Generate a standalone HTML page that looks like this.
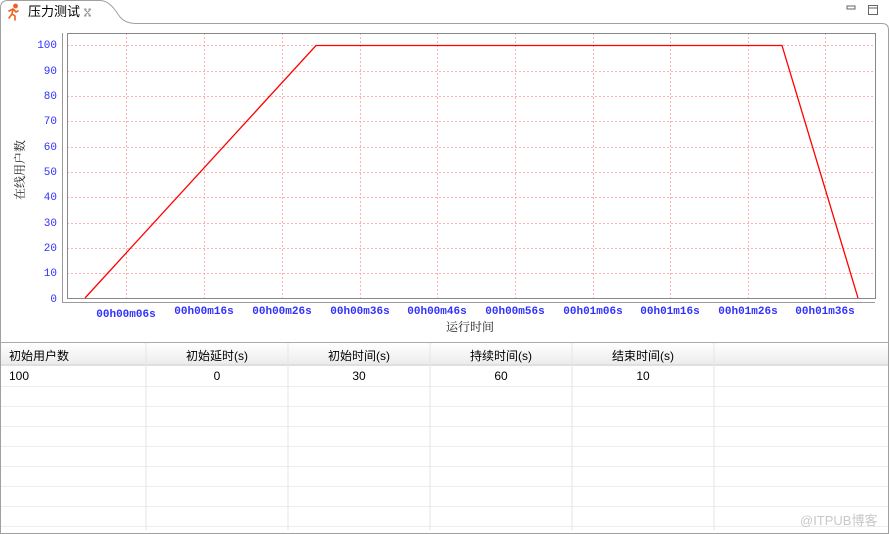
<!DOCTYPE html><html><head><meta charset="utf-8"><style>
body{margin:0;width:890px;height:534px;background:#fff;overflow:hidden;font-family:"Liberation Sans","Noto Sans CJK SC",sans-serif;position:relative}
.t{position:absolute;font-size:12px;color:#000}
</style></head><body>
<svg width="890" height="534" style="position:absolute;left:0;top:0" font-family="Liberation Mono, monospace">
<path d="M0.5 534V8Q0.5 0.5 8 0.5H100Q108 0.5 115 10L120 17Q125 23 135 23.5H882Q888.5 23.5 888.5 30V533.5H0.5" fill="none" stroke="#a0a0a0"/>
<rect x="847" y="6" width="8" height="3" fill="none" stroke="#666"/>
<rect x="868.5" y="5.5" width="9" height="9" fill="none" stroke="#666"/><line x1="868" y1="8" x2="878" y2="8" stroke="#666"/>
<g stroke="#f06020" stroke-width="1.6" fill="none" stroke-linecap="round"><path d="M9 11l4-2 3 3 2-1 M13 9l-1 5-3 4 M12 14l3 2v4"/><circle cx="15.5" cy="6" r="1.6" fill="#f06020"/></g>
<text x="28" y="16" font-size="13" font-family="Liberation Sans,Noto Sans CJK SC,sans-serif">压力测试</text>
<g stroke="#999" stroke-width="1" fill="none"><path d="M84.5 9.5l6 6M90.5 9.5l-6 6M84 9h2v2M91 9h-2v2M84 16h2v-2M91 16h-2v-2"/></g>
<g stroke="#ffb0b0" stroke-dasharray="2,2" stroke-width="1">
<line x1="67" x2="875" y1="45.5" y2="45.5"/><line x1="67" x2="875" y1="71.5" y2="71.5"/><line x1="67" x2="875" y1="96.5" y2="96.5"/><line x1="67" x2="875" y1="121.5" y2="121.5"/><line x1="67" x2="875" y1="147.5" y2="147.5"/><line x1="67" x2="875" y1="172.5" y2="172.5"/><line x1="67" x2="875" y1="197.5" y2="197.5"/><line x1="67" x2="875" y1="223.5" y2="223.5"/><line x1="67" x2="875" y1="248.5" y2="248.5"/><line x1="67" x2="875" y1="273.5" y2="273.5"/>
<line y1="33" y2="298" x1="126.5" x2="126.5"/><line y1="33" y2="298" x1="204.5" x2="204.5"/><line y1="33" y2="298" x1="282.5" x2="282.5"/><line y1="33" y2="298" x1="360.5" x2="360.5"/><line y1="33" y2="298" x1="437.5" x2="437.5"/><line y1="33" y2="298" x1="515.5" x2="515.5"/><line y1="33" y2="298" x1="593.5" x2="593.5"/><line y1="33" y2="298" x1="670.5" x2="670.5"/><line y1="33" y2="298" x1="748.5" x2="748.5"/><line y1="33" y2="298" x1="825.5" x2="825.5"/>
</g>
<rect x="67.5" y="33.5" width="808" height="265" fill="none" stroke="#888"/>
<line x1="62.5" y1="33" x2="62.5" y2="302" stroke="#999"/>
<line x1="62" y1="302.5" x2="875" y2="302.5" stroke="#999"/>
<polyline points="85,298 316,45.5 782,45.5 858,298" fill="none" stroke="#f00" stroke-width="1.3"/>
<g font-size="11" fill="#3030ff" text-anchor="end">
<text x="57" y="48">100</text><text x="57" y="74">90</text><text x="57" y="99">80</text><text x="57" y="124">70</text><text x="57" y="150">60</text><text x="57" y="175">50</text><text x="57" y="200">40</text><text x="57" y="226">30</text><text x="57" y="251">20</text><text x="57" y="276">10</text><text x="57" y="302">0</text>
</g>
<g font-size="11" fill="#3030ff" text-anchor="middle" font-weight="bold">
<text x="126" y="317">00h00m06s</text><text x="204" y="314">00h00m16s</text><text x="282" y="314">00h00m26s</text><text x="360" y="314">00h00m36s</text><text x="437" y="314">00h00m46s</text><text x="515" y="314">00h00m56s</text><text x="593" y="314">00h01m06s</text><text x="670" y="314">00h01m16s</text><text x="748" y="314">00h01m26s</text><text x="825" y="314">00h01m36s</text>
</g>
<text x="470" y="331" font-size="12" text-anchor="middle" font-family="Noto Serif CJK SC,serif" fill="#222">运行时间</text>
<text transform="translate(24,170) rotate(-90)" font-size="12" text-anchor="middle" font-family="Noto Serif CJK SC,serif" fill="#222">在线用户数</text>
<line x1="1" x2="888" y1="342.5" y2="342.5" stroke="#aaa"/>
<defs><linearGradient id="g" x1="0" y1="0" x2="0" y2="1"><stop offset="0" stop-color="#fff"/><stop offset="1" stop-color="#ececec"/></linearGradient></defs>
<rect x="1" y="343" width="887" height="21" fill="url(#g)"/>
<line x1="1" x2="888" y1="365" y2="365" stroke="#dde0e0" stroke-width="2"/>
<g stroke="#eceeee">
<line x1="1" x2="888" y1="386.5" y2="386.5"/><line x1="1" x2="888" y1="406.5" y2="406.5"/><line x1="1" x2="888" y1="426.5" y2="426.5"/><line x1="1" x2="888" y1="446.5" y2="446.5"/><line x1="1" x2="888" y1="466.5" y2="466.5"/><line x1="1" x2="888" y1="486.5" y2="486.5"/><line x1="1" x2="888" y1="506.5" y2="506.5"/><line x1="1" x2="888" y1="526.5" y2="526.5"/>
</g>
<g stroke="#e4e6e6" stroke-width="1">
<line x1="146" x2="146" y1="343" y2="530"/><line x1="288" x2="288" y1="343" y2="530"/><line x1="430" x2="430" y1="343" y2="530"/><line x1="572" x2="572" y1="343" y2="530"/><line x1="714" x2="714" y1="343" y2="530"/>
</g>
</svg>
<div class="t" style="left:9px;top:347px">初始用户数</div>
<div class="t" style="left:146px;width:142px;text-align:center;top:347px">初始延时(s)</div>
<div class="t" style="left:288px;width:142px;text-align:center;top:347px">初始时间(s)</div>
<div class="t" style="left:430px;width:142px;text-align:center;top:347px">持续时间(s)</div>
<div class="t" style="left:572px;width:142px;text-align:center;top:347px">结束时间(s)</div>
<div class="t" style="left:9px;top:369px">100</div>
<div class="t" style="left:146px;width:142px;text-align:center;top:369px">0</div>
<div class="t" style="left:288px;width:142px;text-align:center;top:369px">30</div>
<div class="t" style="left:430px;width:142px;text-align:center;top:369px">60</div>
<div class="t" style="left:572px;width:142px;text-align:center;top:369px">10</div>
<div class="t" style="left:800px;top:510px;font-size:13px;color:#c8c8c8">@ITPUB博客</div>
</body></html>
